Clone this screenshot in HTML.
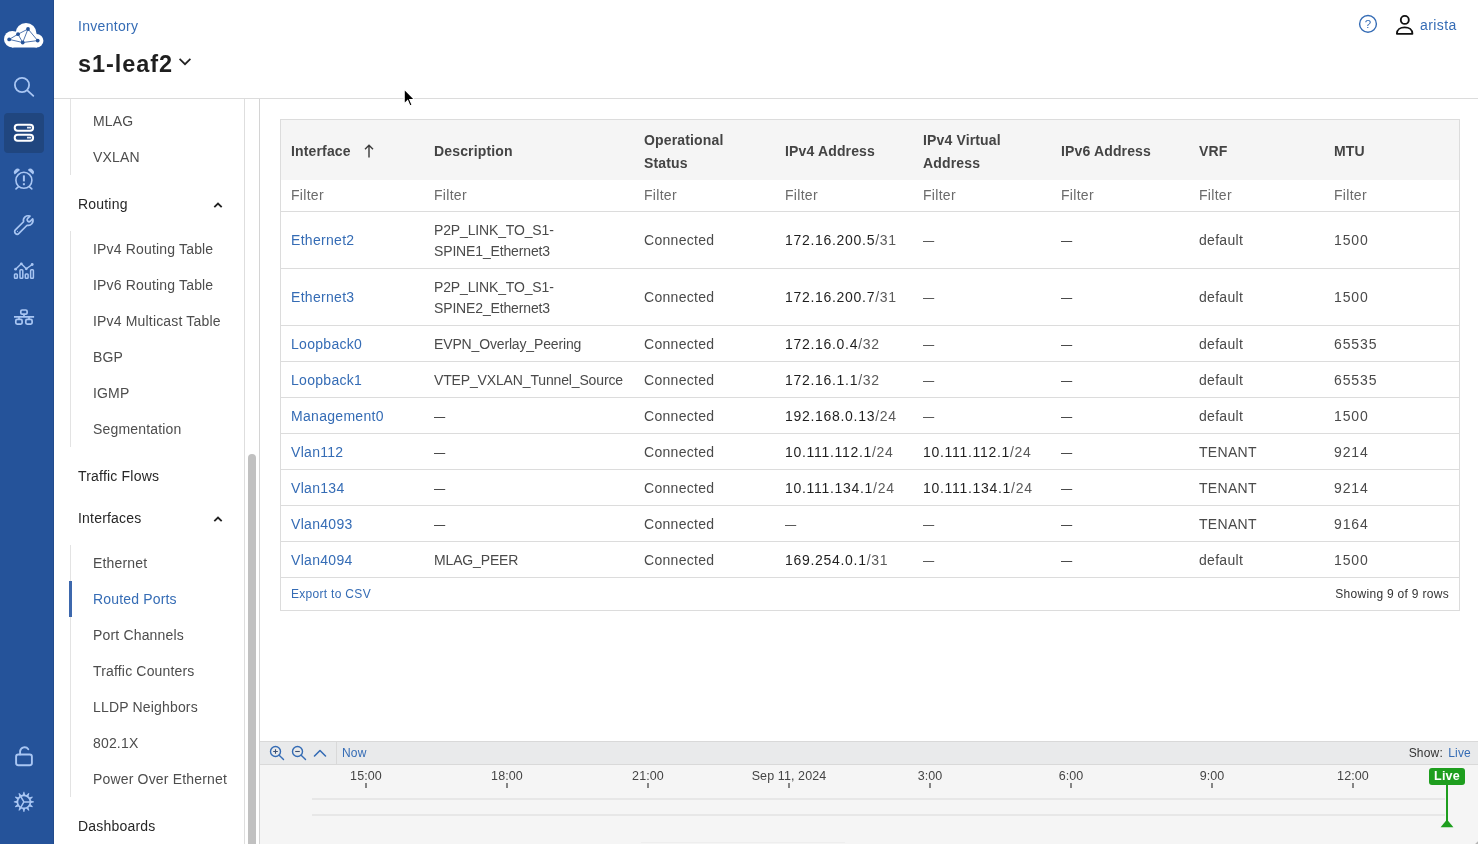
<!DOCTYPE html>
<html lang="en">
<head>
<meta charset="utf-8">
<title>s1-leaf2 - Routed Ports</title>
<style>
*{box-sizing:border-box;margin:0;padding:0}
html,body{width:1478px;height:844px;overflow:hidden;background:#fff}
body{font-family:"Liberation Sans",sans-serif;font-size:14px;color:#4a4a4a;position:relative}
.abs{position:absolute}
#nav,#hdr,#side,#sbar,#main{will-change:transform}
a{color:#356cb5;text-decoration:none}
/* left nav */
#nav{position:absolute;left:0;top:0;width:54px;height:844px;background:#25539a;box-shadow:inset -1px 0 0 #224b8c}
#nav svg{position:absolute}
#nav .act{position:absolute;left:4px;top:113px;width:40px;height:40px;border-radius:4px;background:#20467f}
/* header */
#hdr{position:absolute;left:54px;top:0;width:1424px;height:99px;border-bottom:1px solid #dcdcdc;background:#fff}
.t{position:absolute;white-space:nowrap}
/* sidebar */
#side{position:absolute;left:54px;top:99px;width:191px;height:745px;border-right:1px solid #dedede;background:#fff;overflow:hidden}
#side .it{position:absolute;left:39px;height:36px;line-height:36px;font-size:14px;color:#4d4d4d;letter-spacing:.17px;white-space:nowrap}
#side .hd{position:absolute;left:24px;height:36px;line-height:36px;font-size:14px;color:#262626;letter-spacing:.2px;white-space:nowrap}
#side .ln{position:absolute;left:16px;width:1px;background:#e3e3e3}
#side .chev{position:absolute;left:159px}
#sbar{position:absolute;left:245px;top:99px;width:15px;height:745px;border-right:1px solid #d4d4d4;background:#fff}
#sbar i{position:absolute;left:3px;top:355px;width:8px;height:400px;border-radius:4px;background:#c1c1c1}
/* main */
#main{position:absolute;left:260px;top:99px;width:1218px;height:745px;background:#fff}

#tbw{position:absolute;left:20px;top:20px;width:1180px;height:492px;border:1px solid #dcdcdc;background:#fff}
#tb{border-collapse:collapse;table-layout:fixed;width:1178px;font-size:14px;letter-spacing:.3px}
#tb th{background:#f5f5f5;text-align:left;font-weight:bold;color:#444;padding:3px 10px 0;line-height:23px;vertical-align:middle;font-size:14px;letter-spacing:.15px}
#tb td{padding:2px 10px 0;vertical-align:middle;line-height:21px;color:#4a4a4a;border-top:1px solid #dcdcdc;white-space:nowrap}
#tb tr.f td{border-top:none;color:#6b6b6b;padding-top:0}
#tb tbody td:nth-child(2){letter-spacing:-.15px}
#tb td .d{display:inline-block;transform:scaleX(.8);transform-origin:0 50%}
#tb tbody td:nth-child(8){letter-spacing:.9px}
#tb td.ip{color:#5a5a5a;letter-spacing:.7px}
#tb td.ip b{font-weight:normal;color:#1f1f1f}
#tfoot{position:absolute;left:0;top:457px;width:1178px;height:33px;border-top:1px solid #dcdcdc;font-size:12px;line-height:33px;letter-spacing:.3px;color:#333}

/* timeline */
#tl{position:absolute;left:0;top:642px;width:1218px;height:103px;background:#f5f5f5}
#tlbar{position:absolute;left:0;top:0;width:1218px;height:24px;background:#e9eaeb;border-top:1px solid #d9d9d9;border-bottom:1px solid #d9d9d9}
#tlbar .sep{position:absolute;left:76px;top:0;width:1px;height:22px;background:#d9d9d9}
#tl .lb{position:absolute;top:126px;width:120px;margin-left:-60px;text-align:center;font-size:12.5px;line-height:16px;color:#444;letter-spacing:.1px;white-space:nowrap}
#tl .tk{position:absolute;top:140px;width:1.5px;height:5px;background:#858585}
#tl .hl{position:absolute;left:52px;width:1133px;height:2px;background:#e7e7e7}
</style>
</head>
<body>
<div id="nav">
  <div class="act"></div>
<svg style="left:0;top:15px" width="50" height="40" viewBox="0 15 50 40">
<g fill="#fff"><circle cx="26" cy="33.5" r="10.5"/><circle cx="12.3" cy="39.2" r="8.3"/><circle cx="36.6" cy="40.7" r="6.8"/><rect x="12" y="36" width="25" height="11.5"/></g>
<g stroke="#25539a" stroke-width="0.8" fill="none"><path d="M9.2 39.4L18 34.2L28 29L37.7 40.6L22.7 42.5L9.2 39.4M18 34.2L22.7 42.5L28 29"/></g>
<g fill="#25539a"><circle cx="28" cy="29" r="1.9"/><circle cx="18" cy="34.2" r="1.9"/><circle cx="9.2" cy="39.4" r="1.9"/><circle cx="22.7" cy="42.5" r="1.9"/><circle cx="37.7" cy="40.6" r="1.9"/></g>
</svg>
<svg style="left:4px;top:67px" width="40" height="40" viewBox="0 0 40 40" fill="none" stroke="#a9c6f3" stroke-width="1.8" stroke-linecap="round"><circle cx="18" cy="18" r="7.1"/><path d="M23.3 23.3L29.3 28.8"/></svg>
<svg style="left:4px;top:113px" width="40" height="40" viewBox="0 0 40 40" fill="none" stroke="#fff" stroke-width="2"><rect x="10.7" y="11.7" width="18.4" height="6" rx="3"/><rect x="10.7" y="21.7" width="18.4" height="6" rx="3"/><path d="M23 14.7h4.2M23 24.7h4.2" stroke="#dfe8f7" stroke-width="1.8"/></svg>
<svg style="left:4px;top:159px" width="40" height="40" viewBox="0 0 40 40" fill="none" stroke="#a9c6f3" stroke-width="1.6"><circle cx="19.9" cy="21.3" r="8"/><path d="M19.9 16.4v6" stroke-width="2"/><path d="M19.9 24.2v2" stroke-width="2"/><path d="M14.6 27.6L12 29.9M25.2 27.6L27.8 29.9" stroke-linecap="round"/><path d="M10.8 15.5A3.4 3.4 0 0 1 16 11z M29 15.5A3.4 3.4 0 0 0 23.8 11z" fill="#a9c6f3" stroke="none"/></svg>
<svg style="left:4px;top:205px" width="40" height="40" viewBox="0 0 40 40" fill="none" stroke="#a9c6f3" stroke-width="1.7" stroke-linejoin="round"><g transform="translate(24.2 15.6) rotate(45)"><path d="M-1.9 -4.4V-1.2A1.9 1.9 0 0 0 1.9 -1.2V-4.4A4.8 4.8 0 0 1 2.5 4.1V15.6A2.5 2.5 0 0 1 -2.5 15.6V4.1A4.8 4.8 0 0 1 -1.9 -4.4z"/><circle cx="0" cy="15.2" r=".5" fill="#a9c6f3" stroke="none"/></g></svg>
<svg style="left:4px;top:251px" width="40" height="40" viewBox="0 0 40 40" fill="none" stroke="#a9c6f3" stroke-width="1.5"><rect x="10.5" y="23" width="2.8" height="4.3" rx=".8"/><rect x="16" y="18.8" width="2.8" height="8.5" rx=".8"/><rect x="21.3" y="23" width="2.8" height="4.3" rx=".8"/><rect x="26.6" y="18.8" width="2.8" height="8.5" rx=".8"/><path d="M11.6 18.2L17.3 12.8L22.3 17.8L28.2 13.5" stroke-width="1.4"/><g fill="#a9c6f3" stroke="none"><circle cx="11.6" cy="18.2" r="1.4"/><circle cx="17.3" cy="12.8" r="1.4"/><circle cx="22.3" cy="17.8" r="1.4"/><circle cx="28.2" cy="13.5" r="1.4"/></g></svg>
<svg style="left:4px;top:297px" width="40" height="40" viewBox="0 0 40 40" fill="none" stroke="#a9c6f3" stroke-width="1.7"><rect x="16.8" y="13" width="6.3" height="4.2" rx="1.3"/><rect x="11.8" y="22.4" width="6.3" height="4.7" rx="1.3"/><rect x="21.8" y="22.4" width="6.3" height="4.7" rx="1.3"/><path d="M10 19.9H30.1M20 17.2v2.7M15 19.9v2.5M25 19.9v2.5"/></svg>
<svg style="left:4px;top:736px" width="40" height="40" viewBox="0 0 40 40" fill="none" stroke="#a9c6f3" stroke-width="1.9"><rect x="12.1" y="18.5" width="15.8" height="10.7" rx="2.2"/><path d="M16.1 18.4V15A4.6 4.6 0 0 1 24.3 13.2" stroke-linecap="round"/></svg>
<svg style="left:4px;top:782px" width="40" height="40" viewBox="0 0 40 40"><g fill="#a9c6f3"><polygon points="26.56,18.55 29.99,19.50 29.99,20.30 26.56,21.25"/><polygon points="26.35,22.06 28.84,24.60 28.44,25.30 25.00,24.40"/><polygon points="24.40,25.00 25.30,28.44 24.60,28.84 22.06,26.35"/><polygon points="21.25,26.56 20.30,29.99 19.50,29.99 18.55,26.56"/><polygon points="17.74,26.35 15.20,28.84 14.50,28.44 15.40,25.00"/><polygon points="14.80,24.40 11.36,25.30 10.96,24.60 13.45,22.06"/><polygon points="13.24,21.25 9.81,20.30 9.81,19.50 13.24,18.55"/><polygon points="13.45,17.74 10.96,15.20 11.36,14.50 14.80,15.40"/><polygon points="15.40,14.80 14.50,11.36 15.20,10.96 17.74,13.45"/><polygon points="18.55,13.24 19.50,9.81 20.30,9.81 21.25,13.24"/><polygon points="22.06,13.45 24.60,10.96 25.30,11.36 24.40,14.80"/><polygon points="25.00,15.40 28.44,14.50 28.84,15.20 26.35,17.74"/></g><g fill="none" stroke="#a9c6f3" stroke-width="1.7"><circle cx="19.9" cy="19.9" r="6.5"/><path d="M19.9 19.9L26.40 19.90M19.9 19.9L16.65 25.53M19.9 19.9L16.65 14.27" stroke-width="1.5"/></g></svg>
</div>
<div id="hdr">
  <a class="t" style="left:24px;top:16px;line-height:20px;font-size:14px;letter-spacing:.3px">Inventory</a>
  <div class="t" style="left:24px;top:47.7px;line-height:32px;font-size:23.5px;font-weight:bold;color:#1f1f1f;letter-spacing:.95px">s1-leaf2</div>
  <svg class="abs" style="left:124px;top:57px" width="14" height="10" viewBox="0 0 14 10" fill="none" stroke="#222" stroke-width="1.7"><path d="M1.6 1.8L7 7.2L12.4 1.8"/></svg>
<svg class="abs" style="left:1303px;top:13px" width="22" height="22" viewBox="0 0 22 22"><circle cx="11" cy="10.9" r="8.4" fill="none" stroke="#356cb5" stroke-width="1.4"/><text x="11" y="15" text-anchor="middle" font-family="Liberation Sans, sans-serif" font-size="11.5" fill="#356cb5">?</text></svg>
<svg class="abs" style="left:1340px;top:13px" width="22" height="24" viewBox="0 0 22 24" fill="none" stroke="#111" stroke-width="1.85"><circle cx="10.8" cy="6.9" r="4"/><path d="M2.9 20.8C2.9 16.6 6.4 14.4 10.7 14.4S18.4 16.6 18.4 20.8z" stroke-linejoin="round"/></svg>
  <a class="t" style="left:1366px;top:15px;line-height:20px;font-size:14px;letter-spacing:.4px">arista</a>
</div>
<div id="side">
  <div class="ln" style="top:0;height:76px"></div>
  <div class="it" style="top:4px">MLAG</div>
  <div class="it" style="top:40px">VXLAN</div>
  <div class="hd" style="top:87px">Routing</div><svg class="chev" style="top:102px" width="10" height="8" viewBox="0 0 10 8" fill="none" stroke="#222" stroke-width="1.8"><path d="M1.3 6.2L5 2.5L8.7 6.2"/></svg>
  <div class="ln" style="top:132px;height:216px"></div>
  <div class="it" style="top:132px">IPv4 Routing Table</div>
  <div class="it" style="top:168px">IPv6 Routing Table</div>
  <div class="it" style="top:204px">IPv4 Multicast Table</div>
  <div class="it" style="top:240px">BGP</div>
  <div class="it" style="top:276px">IGMP</div>
  <div class="it" style="top:312px">Segmentation</div>
  <div class="hd" style="top:359px">Traffic Flows</div>
  <div class="hd" style="top:401px">Interfaces</div><svg class="chev" style="top:416px" width="10" height="8" viewBox="0 0 10 8" fill="none" stroke="#222" stroke-width="1.8"><path d="M1.3 6.2L5 2.5L8.7 6.2"/></svg>
  <div class="ln" style="top:446px;height:252px"></div>
  <div class="it" style="top:446px">Ethernet</div>
  <div class="abs" style="left:15px;top:482px;width:3px;height:36px;background:#3d68ad"></div>
  <div class="it" style="top:482px;color:#356cb5">Routed Ports</div>
  <div class="it" style="top:518px">Port Channels</div>
  <div class="it" style="top:554px">Traffic Counters</div>
  <div class="it" style="top:590px">LLDP Neighbors</div>
  <div class="it" style="top:626px">802.1X</div>
  <div class="it" style="top:662px">Power Over Ethernet</div>
  <div class="hd" style="top:709px">Dashboards</div>
</div>
<div id="sbar"><i></i></div>
<div id="main">
<div id="tbw">
<table id="tb">
<colgroup><col style="width:143px"><col style="width:210px"><col style="width:141px"><col style="width:138px"><col style="width:138px"><col style="width:138px"><col style="width:135px"><col style="width:135px"></colgroup>
<thead>
<tr class="h" style="height:60px"><th>Interface<svg width="12" height="14" viewBox="0 0 12 14" style="margin-left:12px;vertical-align:-2px"><path d="M6 13.5V1.2M2 5.2L6 1.2l4 4" fill="none" stroke="#3a3a3a" stroke-width="1.4"/></svg></th><th>Description</th><th>Operational<br>Status</th><th>IPv4 Address</th><th>IPv4 Virtual<br>Address</th><th>IPv6 Address</th><th>VRF</th><th>MTU</th></tr>
<tr class="f" style="height:31px"><td>Filter</td><td>Filter</td><td>Filter</td><td>Filter</td><td>Filter</td><td>Filter</td><td>Filter</td><td>Filter</td></tr>
</thead>
<tbody>
<tr style="height:57px"><td><a>Ethernet2</a></td><td>P2P_LINK_TO_S1-<br>SPINE1_Ethernet3</td><td>Connected</td><td class="ip"><b>172.16.200.5</b>/31</td><td class="ip"><span class="d">—</span></td><td><span class="d">—</span></td><td>default</td><td>1500</td></tr>
<tr style="height:57px"><td><a>Ethernet3</a></td><td>P2P_LINK_TO_S1-<br>SPINE2_Ethernet3</td><td>Connected</td><td class="ip"><b>172.16.200.7</b>/31</td><td class="ip"><span class="d">—</span></td><td><span class="d">—</span></td><td>default</td><td>1500</td></tr>
<tr style="height:36px"><td><a>Loopback0</a></td><td>EVPN_Overlay_Peering</td><td>Connected</td><td class="ip"><b>172.16.0.4</b>/32</td><td class="ip"><span class="d">—</span></td><td><span class="d">—</span></td><td>default</td><td>65535</td></tr>
<tr style="height:36px"><td><a>Loopback1</a></td><td>VTEP_VXLAN_Tunnel_Source</td><td>Connected</td><td class="ip"><b>172.16.1.1</b>/32</td><td class="ip"><span class="d">—</span></td><td><span class="d">—</span></td><td>default</td><td>65535</td></tr>
<tr style="height:36px"><td><a>Management0</a></td><td><span class="d">—</span></td><td>Connected</td><td class="ip"><b>192.168.0.13</b>/24</td><td class="ip"><span class="d">—</span></td><td><span class="d">—</span></td><td>default</td><td>1500</td></tr>
<tr style="height:36px"><td><a>Vlan112</a></td><td><span class="d">—</span></td><td>Connected</td><td class="ip"><b>10.111.112.1</b>/24</td><td class="ip"><b>10.111.112.1</b>/24</td><td><span class="d">—</span></td><td>TENANT</td><td>9214</td></tr>
<tr style="height:36px"><td><a>Vlan134</a></td><td><span class="d">—</span></td><td>Connected</td><td class="ip"><b>10.111.134.1</b>/24</td><td class="ip"><b>10.111.134.1</b>/24</td><td><span class="d">—</span></td><td>TENANT</td><td>9214</td></tr>
<tr style="height:36px"><td><a>Vlan4093</a></td><td><span class="d">—</span></td><td>Connected</td><td class="ip"><span class="d">—</span></td><td class="ip"><span class="d">—</span></td><td><span class="d">—</span></td><td>TENANT</td><td>9164</td></tr>
<tr style="height:36px"><td><a>Vlan4094</a></td><td>MLAG_PEER</td><td>Connected</td><td class="ip"><b>169.254.0.1</b>/31</td><td class="ip"><span class="d">—</span></td><td><span class="d">—</span></td><td>default</td><td>1500</td></tr>
</tbody>
</table>
<div id="tfoot"><a class="t" style="left:10px;top:0">Export to CSV</a><span class="t" style="right:10px;top:0">Showing 9 of 9 rows</span></div>
</div>
<div id="tl">
<div id="tlbar">
<svg class="abs" style="left:9px;top:3px" width="16" height="16" viewBox="0 0 16 16" fill="none" stroke="#356cb5" stroke-width="1.4"><circle cx="6.5" cy="6.5" r="5"/><path d="M10.2 10.2L14.5 14.5" stroke-linecap="round"/><path d="M4.2 6.5h4.6M6.5 4.2v4.6" stroke="#3b4f73" stroke-width="1.1"/></svg>
<svg class="abs" style="left:31px;top:3px" width="16" height="16" viewBox="0 0 16 16" fill="none" stroke="#356cb5" stroke-width="1.4"><circle cx="6.5" cy="6.5" r="5"/><path d="M10.2 10.2L14.5 14.5" stroke-linecap="round"/><path d="M4.2 6.5h4.6" stroke="#3b4f73" stroke-width="1.1"/></svg>
<svg class="abs" style="left:53px;top:5px" width="14" height="12" viewBox="0 0 14 12" fill="none" stroke="#356cb5" stroke-width="1.6"><path d="M1.5 9L7 3.5 12.5 9" stroke-linecap="round" stroke-linejoin="round"/></svg>
<div class="sep"></div>
<a class="t" style="left:82px;top:0;line-height:22px;font-size:12px;letter-spacing:.2px">Now</a>
<span class="t" style="right:35px;top:0;line-height:22px;font-size:12px;letter-spacing:.2px;color:#333">Show:</span>
<a class="t" style="right:7px;top:0;line-height:22px;font-size:12px;letter-spacing:.2px">Live</a>
</div>
<div class="lb" style="left:106px;top:27px">15:00</div>
<div class="tk" style="left:105.10px;top:42px"></div>
<div class="lb" style="left:247px;top:27px">18:00</div>
<div class="tk" style="left:246.10px;top:42px"></div>
<div class="lb" style="left:388px;top:27px">21:00</div>
<div class="tk" style="left:387.10px;top:42px"></div>
<div class="lb" style="left:529px;top:27px">Sep 11, 2024</div>
<div class="tk" style="left:528.10px;top:42px"></div>
<div class="lb" style="left:670px;top:27px">3:00</div>
<div class="tk" style="left:669.10px;top:42px"></div>
<div class="lb" style="left:811px;top:27px">6:00</div>
<div class="tk" style="left:810.10px;top:42px"></div>
<div class="lb" style="left:952px;top:27px">9:00</div>
<div class="tk" style="left:951.10px;top:42px"></div>
<div class="lb" style="left:1093px;top:27px">12:00</div>
<div class="tk" style="left:1092.10px;top:42px"></div>
<div class="hl" style="top:57px"></div>
<div class="hl" style="top:73px"></div>
<div class="abs" style="left:1169px;top:26.5px;width:36px;height:17px;border-radius:3px;background:#1e9e1e;color:#fff;font-weight:bold;font-size:12.5px;line-height:17px;text-align:center;letter-spacing:.2px">Live</div>
<div class="abs" style="left:1186px;top:43px;width:2px;height:38px;background:#1e9e1e"></div>
<svg class="abs" style="left:1180px;top:78px" width="14" height="9" viewBox="0 0 14 9"><path d="M7 0.4L13.4 8.3H0.6z" fill="#1e9e1e"/></svg>
<div class="abs" style="left:381px;top:101px;width:204px;height:1px;background:#eeeeee"></div>
</div>
</div>
<svg class="abs" style="left:403px;top:88px;z-index:10" width="13.5" height="20" viewBox="0 0 12 18"><path d="M1 1v13.2l3.1-3 2.1 5 1.9-.8-2.1-4.9h4.3z" fill="#000" stroke="#fff" stroke-width="1"/></svg>
<svg class="abs" style="left:1474px;top:840px;z-index:11" width="4" height="4" viewBox="0 0 4 4"><path d="M4 1.2L1.2 4H4z" fill="#b5b5b5"/></svg>
</body>
</html>
